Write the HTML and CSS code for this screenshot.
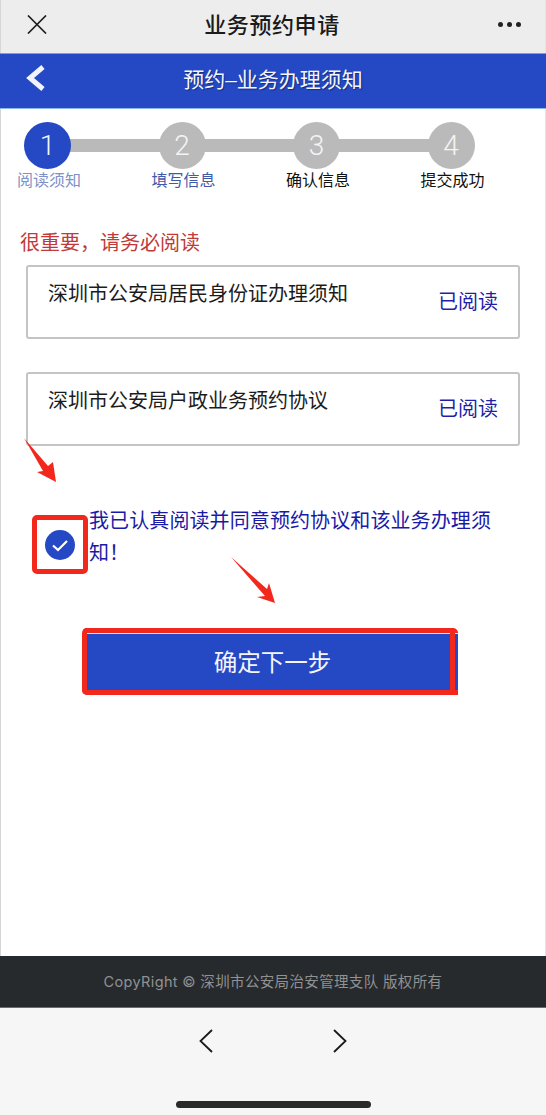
FILE: index.html
```html
<!DOCTYPE html>
<html lang="zh">
<head>
<meta charset="utf-8">
<title>业务预约申请</title>
<link rel="stylesheet" href="styles.css">
</head>
<body>
<div class="page">
  <header class="topbar">
    <svg class="close" viewBox="0 0 20 20"><path d="M0.5 0.5L19.5 19.5M19.5 0.5L0.5 19.5"/></svg>
    <h1 class="top-title">业务预约申请</h1>
    <div class="dots"><i></i><i></i><i></i></div>
  </header>
  <div class="bluebar">
    <svg class="back" viewBox="0 0 22 28"><path d="M18 3L5 14L18 25"/></svg>
    <h2 class="blue-title">预约–业务办理须知</h2>
  </div>
  <main class="content">
    <div class="steps">
      <div class="step"><div class="circle active">1</div><div class="label first">阅读须知</div></div>
      <div class="step"><div class="circle">2</div><div class="label second">填写信息</div></div>
      <div class="step"><div class="circle">3</div><div class="label">确认信息</div></div>
      <div class="step"><div class="circle">4</div><div class="label">提交成功</div></div>
    </div>
    <p class="warning">很重要，请务必阅读</p>
    <div class="card"><span class="card-title">深圳市公安局居民身份证办理须知</span><span class="card-read">已阅读</span></div>
    <div class="card second-card"><span class="card-title">深圳市公安局户政业务预约协议</span><span class="card-read">已阅读</span></div>
    <div class="agree">
      <svg class="arrow arrow-a" viewBox="0 0 36 50"><path d="M2 2L26 30L31 26L34 46L15 36L21 35Z"/></svg>
      <div class="check-box">
        <svg class="check" viewBox="0 0 30 30"><circle cx="15" cy="15" r="15"/><path d="M8 15.5L13 20L22 11"/></svg>
      </div>
      <p class="agree-text">我已认真阅读并同意预约协议和该业务办理须知！</p>
    </div>
    <div class="next-wrap">
      <svg class="arrow arrow-b" viewBox="0 0 48 50"><path d="M2 2L38 34L40 28L46 48L28 42L36 41Z"/></svg>
      <button class="next">确定下一步</button>
    </div>
  </main>
  <footer class="copyright">CopyRight © 深圳市公安局治安管理支队 版权所有</footer>
  <nav class="browser-nav">
    <svg class="nav-icon" viewBox="0 0 14 24"><path d="M13 1L1.5 12L13 23"/></svg>
    <svg class="nav-icon" viewBox="0 0 14 24"><path d="M1 1L12.5 12L1 23"/></svg>
    <div class="home-bar"></div>
  </nav>
</div>
</body>
</html>
```
FILE: styles.css
```css
* { box-sizing: border-box; }
html, body { margin: 0; padding: 0; }
body { font-family: "Liberation Sans", "Noto Sans CJK SC", sans-serif; background: #fff; }
.page {
  width: 546px; height: 1115px; display: flex; flex-direction: column; overflow: hidden;
}
.topbar {
  height: 53px; flex: none; background: #ededed; position: relative;
  display: flex; align-items: center; justify-content: center;
  border-left: 1px solid #d6d6d6; border-right: 1px solid #e4e4e4;
}
.close { position: absolute; left: 26px; top: 15px; width: 20px; height: 19px; fill: none; stroke: #1c1c1c; stroke-width: 1.7; }
.top-title { margin: 0; font-size: 22px; font-weight: 500; color: #1a1a1a; letter-spacing: 0.6px; line-height: 45px; padding-bottom: 3px; transform: translateX(-1px); }
.dots { position: absolute; right: 24px; top: 22px; display: flex; gap: 4px; }
.dots i { width: 5px; height: 5px; border-radius: 50%; background: #222; display: block; }
.bluebar {
  height: 56px; flex: none; background: #2549c4; position: relative;
  border-top: 1px solid #6fa3e6; border-bottom: 1px solid #8bb6ea;
  display: flex; align-items: center; justify-content: center;
}
.back { position: absolute; left: 25px; top: 10px; width: 22px; height: 28px; fill: none; stroke: #f2f4fb; stroke-width: 5; }
.blue-title { margin: 0; font-size: 21px; font-weight: 400; color: #f4f6fc; line-height: 48px; padding-bottom: 2px; text-shadow: 1px 1px 1px rgba(10, 20, 70, .55); }
.content {
  flex: 1; position: relative; padding: 13px 26px 0 25px; display: flex; flex-direction: column;
  border-left: 1px solid #d6d6d6; border-right: 1px solid #e4e4e4;
}
.steps { display: flex; position: relative; width: 450px; margin-left: -2px; }
.steps::before { content: ""; position: absolute; left: 30px; width: 380px; top: 17px; height: 13px; background: #bababa; }
.step { width: 134.5px; flex: none; position: relative; }
.circle {
  width: 47px; height: 47px; border-radius: 50%; background: #bababa; color: #f4f4f4;
  font-size: 28px; line-height: 47px; text-align: center; font-family: "Roboto", sans-serif; font-weight: 300;
}
.circle.active { background: #2549c4; color: #f5f7fd; }
.label { font-size: 16px; line-height: 20px; width: 66px; margin-left: -7px; white-space: nowrap; color: #111; margin-top: 2px; }
.label.first { color: #7d92c8; }
.label.second { color: #3f5ba8; }
.warning { margin: 37px 0 0 -6px; font-size: 20px; line-height: 30px; color: #c03a3a; }
.card {
  width: 494px; height: 74px; margin-top: 7px; background: #fff; border: 2px solid #c4c4c4; border-radius: 3px;
  padding: 0 20px; display: flex; justify-content: space-between;
}
.second-card { margin-top: 33px; }
.card-title { font-size: 20px; line-height: 55px; color: #1c1c1c; }
.card-read { font-size: 20px; line-height: 70px; color: #1f1fa8; }
.agree { position: relative; display: flex; margin-top: 59px; height: 72px; }
.arrow { position: absolute; fill: #f3281c; }
.arrow-a { left: -4px; top: -69px; width: 36px; height: 50px; }
.arrow-b { left: 203px; top: -73px; width: 48px; height: 50px; }
.check-box {
  position: absolute; left: 6px; top: 10px; width: 56px; height: 59px;
  border: 5px solid #f3281c; border-radius: 5px; display: flex; align-items: center; justify-content: center;
}
.check { width: 30px; height: 30px; fill: #2549c4; }
.check path { fill: none; stroke: #fff; stroke-width: 2.2; }
.agree-text { margin: 0 0 0 63px; font-size: 20px; line-height: 32px; color: #1a1aa6; width: 410px; letter-spacing: 0.1px; }
.next-wrap { position: relative; margin-top: 51px; }
.next {
  display: block; position: relative; margin-left: 56px; width: 376px; height: 67px; padding: 4px 0 0;
  background: #2549c4; color: #f4f6fc; box-shadow: inset 0 1px 0 #dfe4f5;
  border: 5px solid #f3281c; border-right: none; border-radius: 5px 5px 0 5px;
  font: 400 23.5px/1 "Liberation Sans", "Noto Sans CJK SC", sans-serif;
}
.next::after { content: ""; position: absolute; right: 3px; top: -1px; bottom: -5px; width: 5px; background: #f3281c; }
.copyright {
  height: 52px; flex: none; background: #272a2d; color: #8f9193; font-size: 14.5px; line-height: 52px;
  text-align: center; letter-spacing: 0.35px; font-family: "Inter", "Noto Sans CJK SC", sans-serif; border-bottom: 1px solid #6b6c6d;
}
.browser-nav {
  height: 107px; flex: none; background: #f6f6f6; position: relative;
  display: flex; justify-content: center; gap: 120px; padding-top: 21px;
}
.nav-icon { width: 14px; height: 24px; fill: none; stroke: #1a1a1a; stroke-width: 1.8; }
.home-bar { position: absolute; left: 176px; top: 93px; width: 195px; height: 7px; border-radius: 4px; background: #2a2a2a; }
```
